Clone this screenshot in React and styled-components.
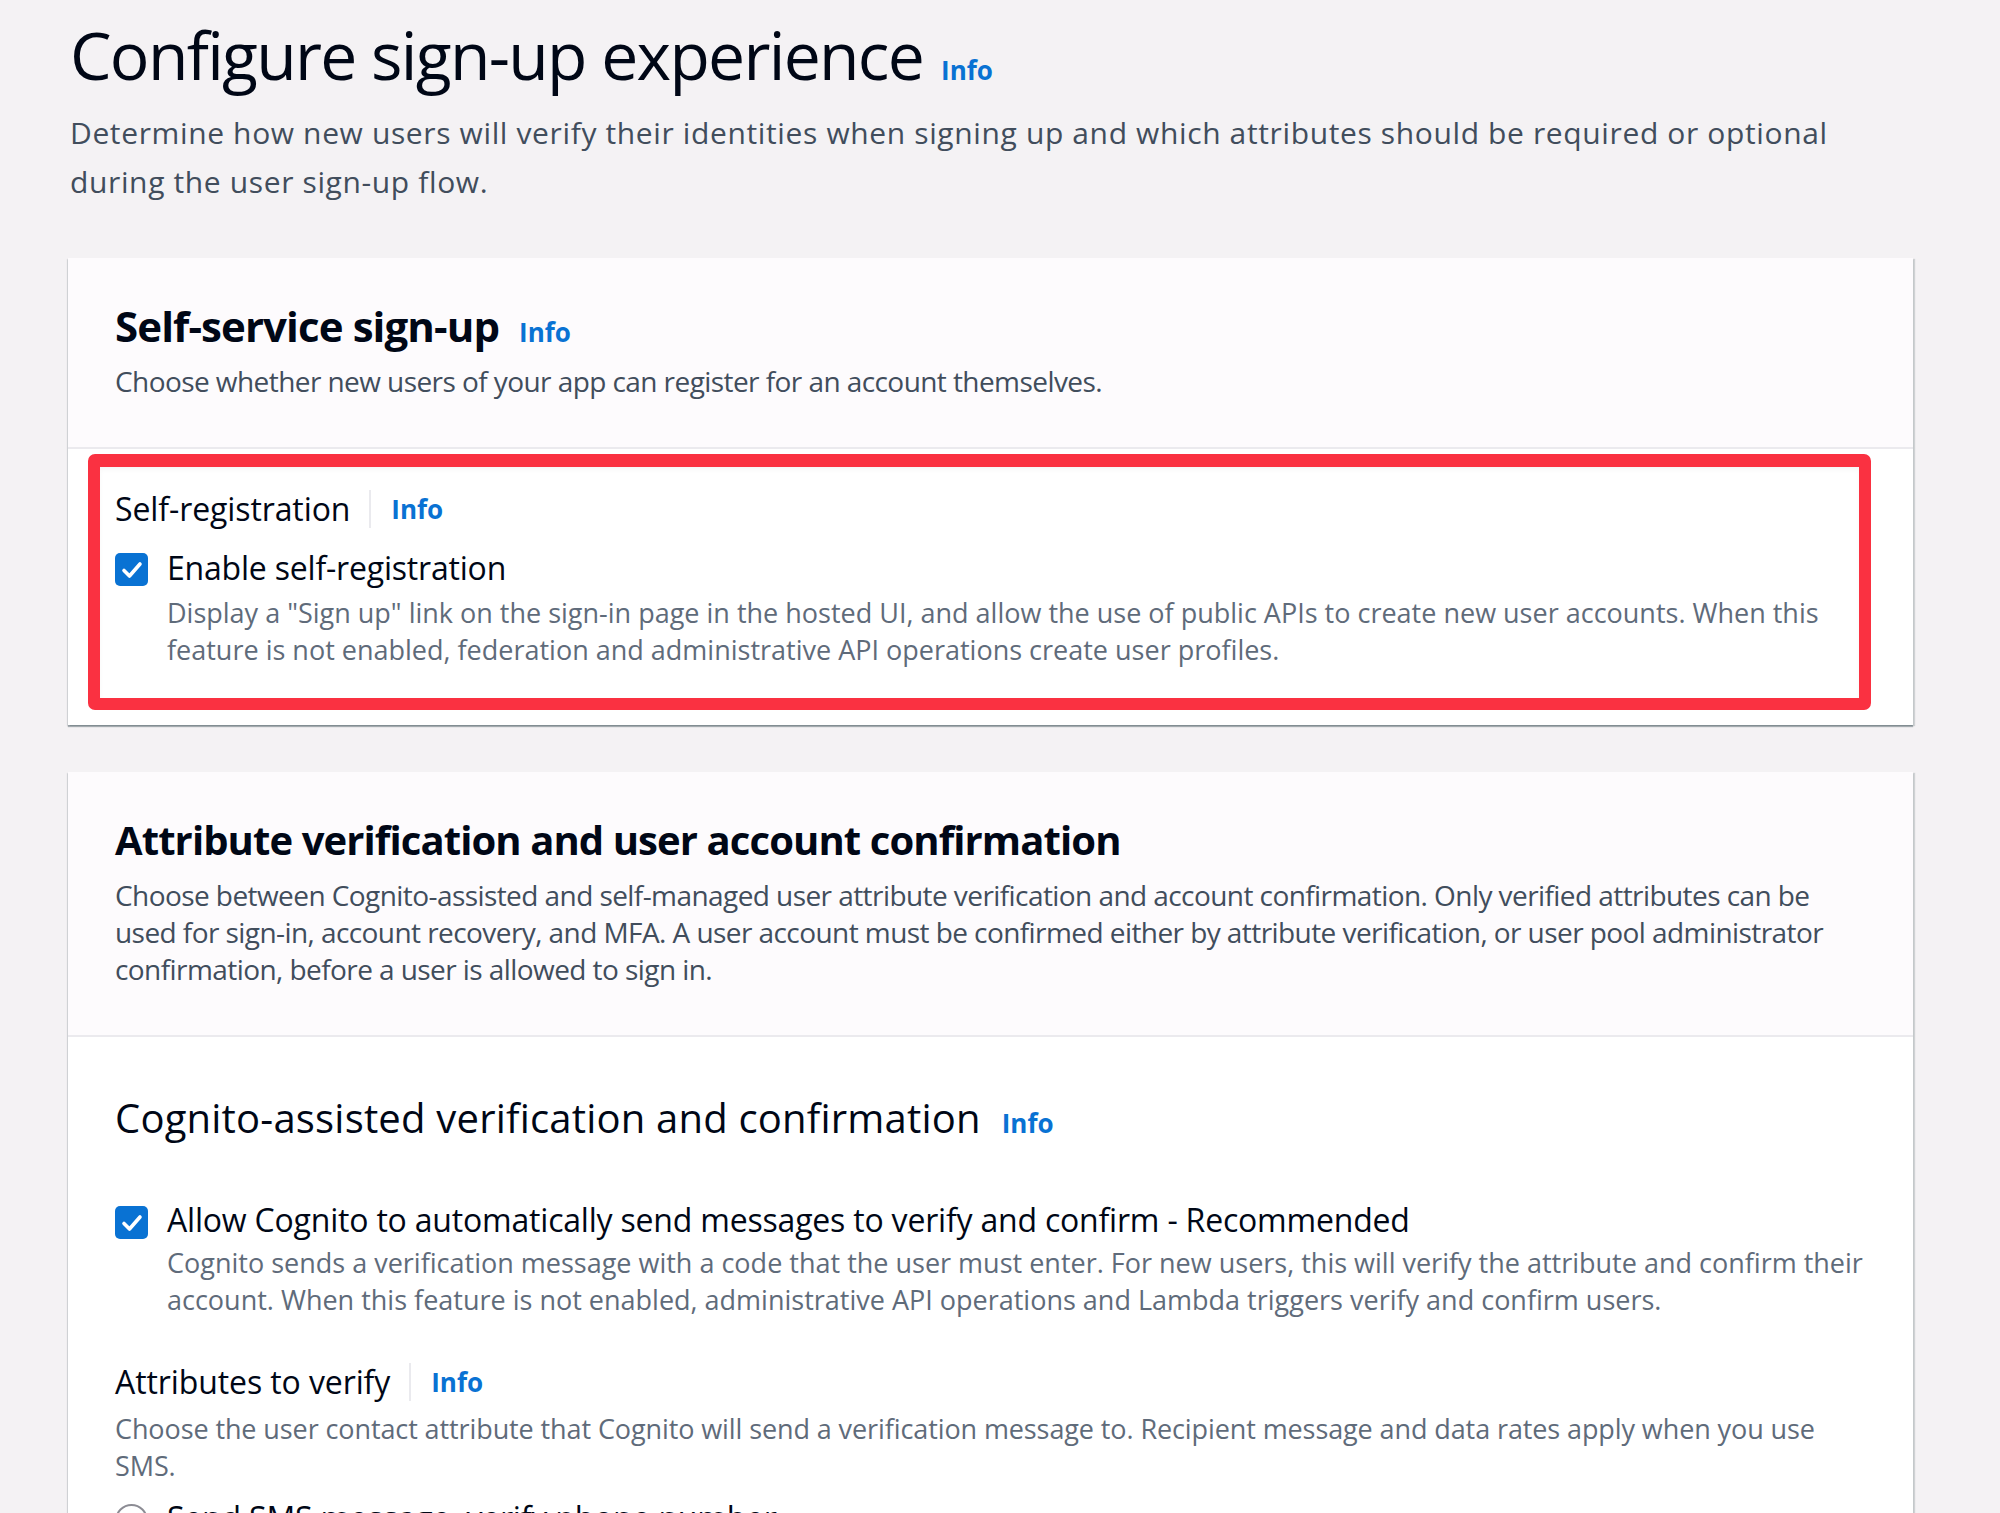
import React from "react";
import styled, { createGlobalStyle } from "styled-components";

const Global = createGlobalStyle`
  html, body { margin: 0; padding: 0; }
  body {
    background: #f4f2f4;
    font-family: "Open Sans", "Noto Sans", Arial, sans-serif;
    color: #000716;
    -webkit-font-smoothing: antialiased;
  }
`;

const Page = styled.main`
  padding: 14px 87px 0 70px;
  display: flex;
  flex-direction: column;
`;

const PageTitle = styled.h1`
  margin: 0;
  font-size: 66px;
  line-height: 80px;
  font-weight: 400;
  letter-spacing: -1.7px;
  color: #000716;
  display: flex;
  align-items: baseline;
  gap: 18px;
`;

const Info = styled.a`
  font-size: ${(p) => p.$size || 26}px;
  line-height: 1;
  font-weight: 700;
  color: #0972d3;
  text-decoration: none;
  letter-spacing: 0;
  cursor: pointer;
`;

const PageDesc = styled.p`
  margin: 14px 0 0;
  max-width: 1800px;
  font-size: 30px;
  line-height: 49px;
  color: #414d5c;
  letter-spacing: 0.63px;
`;

const Card = styled.section`
  margin-top: ${(p) => p.$mt}px;
  margin-left: -2px;
  background: #ffffff;
  box-shadow: 0 2px 1px 0 rgba(0, 28, 36, 0.3), 2px 1px 1px 0 rgba(0, 28, 36, 0.15),
    -1px 1px 1px 0 rgba(0, 28, 36, 0.1);
  display: flex;
  flex-direction: column;
`;

const CardHeader = styled.header`
  background: #fdfbfd;
  padding: 44px 47px 47px 47px;
  border-bottom: 2px solid #ebeaee;
`;

const CardTitle = styled.h2`
  margin: 0;
  font-size: ${(p) => p.$size || 42}px;
  line-height: 48px;
  font-weight: 700;
  letter-spacing: -0.9px;
  display: flex;
  align-items: baseline;
  gap: 20px;
`;

const CardDesc = styled.p`
  margin: 13px 0 0;
  font-size: 28px;
  line-height: 37px;
  color: #414d5c;
  letter-spacing: -0.57px;
`;

const CardBody = styled.div`
  padding: ${(p) => p.$pad};
  display: flex;
  flex-direction: column;
`;

const Highlight = styled.div`
  border: 12px solid #fa3141;
  border-top-width: 13px;
  border-radius: 7px;
  padding: 22px 15px 30px 15px;
  box-shadow: inset 0 3px 6px -2px rgba(0, 0, 0, 0.06);
  display: flex;
  flex-direction: column;
`;

const SectionTitle = styled.h3`
  margin: 0;
  font-size: 40px;
  line-height: 48px;
  font-weight: 400;
  letter-spacing: 0.2px;
  display: flex;
  align-items: baseline;
  gap: 21px;
`;

const FieldLabel = styled.div`
  display: flex;
  align-items: center;
  margin-top: ${(p) => p.$mt || 0}px;
  font-size: 32px;
  line-height: 40px;
  letter-spacing: -0.1px;
  color: #000716;
`;

const LabelDivider = styled.span`
  width: 2px;
  height: 38px;
  background: #eaeaee;
  margin: 0 20px 0 19px;
`;

const OptionRow = styled.label`
  display: flex;
  align-items: flex-start;
  gap: 19px;
  margin-top: ${(p) => p.$mt || 0}px;
`;

const CheckBox = styled.span`
  flex: none;
  width: 33px;
  height: 33px;
  margin-top: ${(p) => p.$offset || 6}px;
  border-radius: 5px;
  background: #0972d3;
  display: flex;
  align-items: center;
  justify-content: center;
`;

const Radio = styled.span`
  flex: none;
  width: 29px;
  height: 29px;
  margin-top: 6px;
  border-radius: 50%;
  border: 2px solid #8c8c94;
  background: #fff;
`;

const OptionText = styled.div`
  display: flex;
  flex-direction: column;
`;

const OptionLabel = styled.span`
  font-size: 32px;
  line-height: 40px;
  letter-spacing: -0.2px;
  color: #000716;
`;

const OptionDesc = styled.span`
  margin-top: ${(p) => p.$mt || 5}px;
  font-size: 27px;
  line-height: 37px;
  letter-spacing: 0;
  color: #5f6b7a;
`;

const FieldDesc = styled.p`
  margin: 9px 0 0;
  padding-right: 20px;
  font-size: 27px;
  line-height: 36.5px;
  letter-spacing: -0.1px;
  color: #5f6b7a;
`;

const Check = () => (
  <svg width="24" height="24" viewBox="0 0 24 24" fill="none">
    <path d="M4 12.5 L9.5 18 L20 6" stroke="#fff" strokeWidth="3.6" strokeLinecap="round" strokeLinejoin="round" />
  </svg>
);

export default function App() {
  return (
    <>
      <Global />
      <Page>
        <PageTitle>
          Configure sign-up experience <Info $size={26}>Info</Info>
        </PageTitle>
        <PageDesc>
          Determine how new users will verify their identities when signing up and which attributes should be required or
          optional during the user sign-up flow.
        </PageDesc>

        <Card $mt={52}>
          <CardHeader>
            <CardTitle>
              Self-service sign-up <Info>Info</Info>
            </CardTitle>
            <CardDesc>Choose whether new users of your app can register for an account themselves.</CardDesc>
          </CardHeader>
          <CardBody $pad="5px 42px 15px 20px">
            <Highlight>
              <FieldLabel>
                Self-registration
                <LabelDivider />
                <Info>Info</Info>
              </FieldLabel>
              <OptionRow $mt={19}>
                <CheckBox $offset={5}>
                  <Check />
                </CheckBox>
                <OptionText>
                  <OptionLabel>Enable self-registration</OptionLabel>
                  <OptionDesc $mt={6}>
                    Display a "Sign up" link on the sign-in page in the hosted UI, and allow the use of public APIs to
                    create new user accounts. When this feature is not enabled, federation and administrative API
                    operations create user profiles.
                  </OptionDesc>
                </OptionText>
              </OptionRow>
            </Highlight>
          </CardBody>
        </Card>

        <Card $mt={47}>
          <CardHeader>
            <CardTitle $size={40}>Attribute verification and user account confirmation</CardTitle>
            <CardDesc>
              Choose between Cognito-assisted and self-managed user attribute verification and account confirmation. Only
              verified attributes can be used for sign-in, account recovery, and MFA. A user account must be confirmed
              either by attribute verification, or user pool administrator confirmation, before a user is allowed to sign
              in.
            </CardDesc>
          </CardHeader>
          <CardBody $pad="57px 47px 60px 47px">
            <SectionTitle>
              Cognito-assisted verification and confirmation <Info>Info</Info>
            </SectionTitle>
            <OptionRow $mt={58}>
              <CheckBox $offset={6}>
                <Check />
              </CheckBox>
              <OptionText>
                <OptionLabel>Allow Cognito to automatically send messages to verify and confirm - Recommended</OptionLabel>
                <OptionDesc $mt={4}>
                  Cognito sends a verification message with a code that the user must enter. For new users, this will
                  verify the attribute and confirm their account. When this feature is not enabled, administrative API
                  operations and Lambda triggers verify and confirm users.
                </OptionDesc>
              </OptionText>
            </OptionRow>
            <FieldLabel $mt={44}>
              Attributes to verify
              <LabelDivider />
              <Info>Info</Info>
            </FieldLabel>
            <FieldDesc>
              Choose the user contact attribute that Cognito will send a verification message to. Recipient message and
              data rates apply when you use SMS.
            </FieldDesc>
            <OptionRow $mt={14}>
              <Radio />
              <OptionText>
                <OptionLabel>Send SMS message, verify phone number</OptionLabel>
              </OptionText>
            </OptionRow>
          </CardBody>
        </Card>
      </Page>
    </>
  );
}
